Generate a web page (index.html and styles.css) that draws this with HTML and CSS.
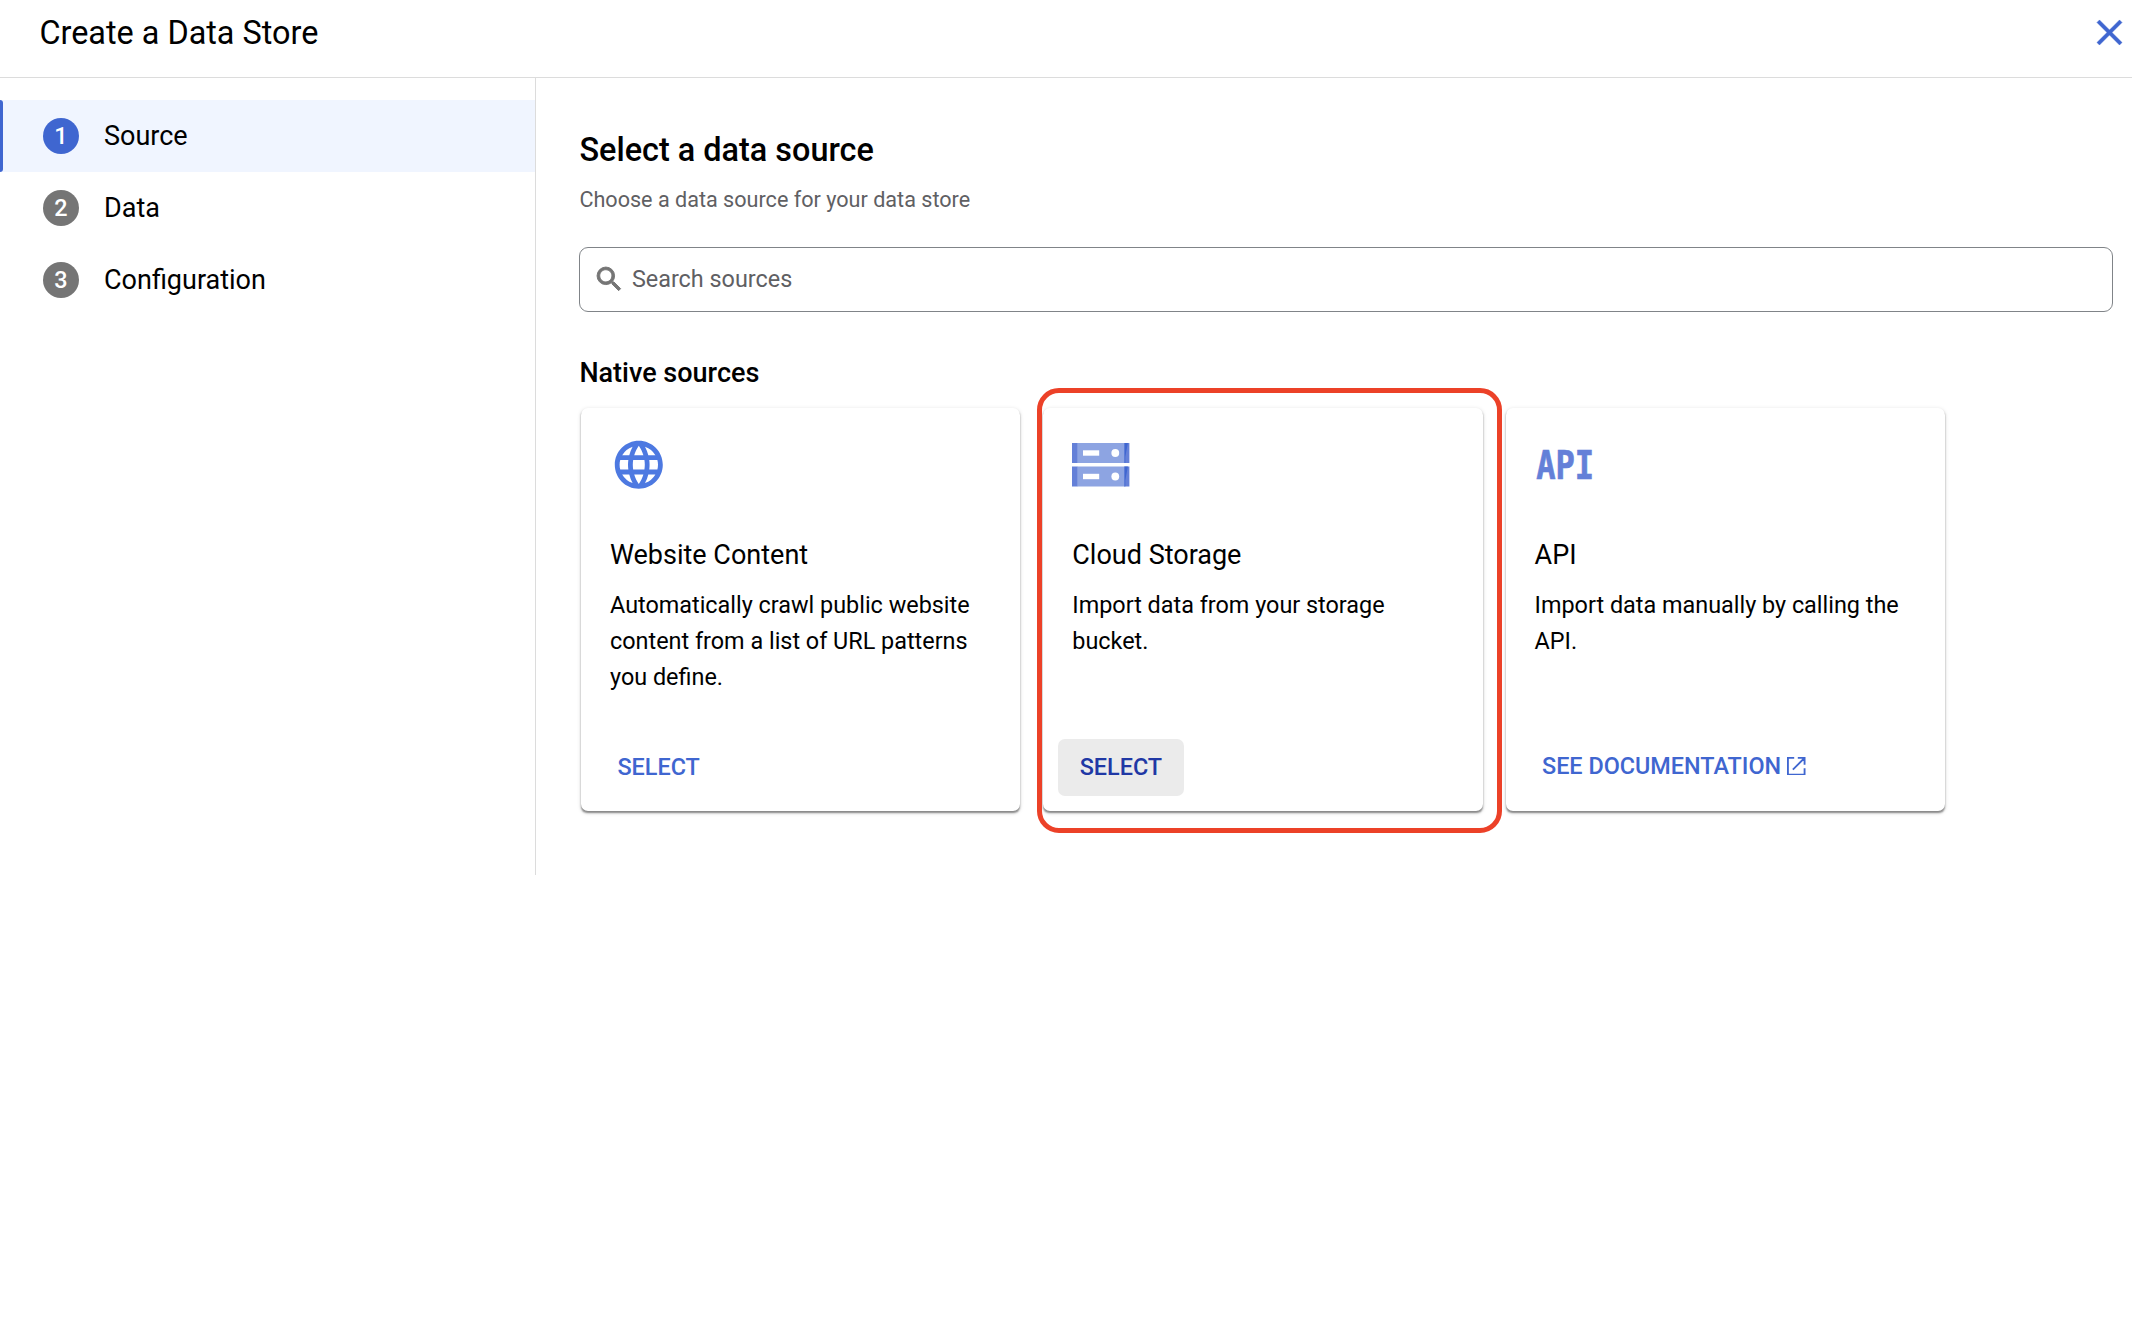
FILE: index.html
```html
<!DOCTYPE html>
<html lang="en">
<head>
<meta charset="utf-8">
<title>Create a Data Store</title>
<link rel="stylesheet" href="styles.css">
</head>
<body>
<header class="topbar">
  <h1 class="topbar-title">Create a Data Store</h1>
  <button class="close" aria-label="Close">
    <svg class="close-icon" viewBox="0 0 24 24"><path fill="currentColor" stroke="currentColor" stroke-width=".25" d="M19 6.41 17.59 5 12 10.59 6.41 5 5 6.41 10.59 12 5 17.59 6.41 19 12 13.41 17.59 19 19 17.59 13.41 12z"/></svg>
  </button>
</header>
<div class="layout">
  <nav class="steps">
    <a class="step step-active"><span class="step-number">1</span><span>Source</span></a>
    <a class="step"><span class="step-number">2</span><span>Data</span></a>
    <a class="step"><span class="step-number">3</span><span>Configuration</span></a>
  </nav>
  <main class="content">
    <h2 class="heading">Select a data source</h2>
    <p class="subheading">Choose a data source for your data store</p>
    <div class="search">
      <svg class="search-icon" viewBox="0 0 24 24"><path fill="currentColor" stroke="currentColor" stroke-width=".7" d="M15.5 14h-.79l-.28-.27A6.471 6.471 0 0 0 16 9.5 6.5 6.5 0 1 0 9.5 16c1.61 0 3.09-.59 4.23-1.57l.27.28v.79l5 4.99L20.49 19l-4.99-5zm-6 0C7.01 14 5 11.99 5 9.5S7.01 5 9.5 5 14 7.01 14 9.5 11.99 14 9.5 14z"/></svg>
      <span class="search-text">Search sources</span>
    </div>
    <h3 class="section-title">Native sources</h3>
    <div class="cards">
      <article class="card">
        <svg class="card-icon globe" viewBox="0 0 24 24"><path fill="currentColor" d="M11.99 2C6.47 2 2 6.48 2 12s4.47 10 9.99 10C17.52 22 22 17.52 22 12S17.52 2 11.99 2zm6.93 6h-2.95a15.65 15.65 0 0 0-1.38-3.56A8.03 8.03 0 0 1 18.92 8zM12 4.04c.83 1.2 1.48 2.53 1.91 3.96h-3.82c.43-1.43 1.08-2.76 1.91-3.96zM4.26 14C4.1 13.36 4 12.69 4 12s.1-1.36.26-2h3.38c-.08.66-.14 1.32-.14 2s.06 1.34.14 2H4.26zm.82 2h2.95c.32 1.25.78 2.45 1.38 3.56A7.987 7.987 0 0 1 5.08 16zm2.95-8H5.08a7.987 7.987 0 0 1 4.33-3.56A15.65 15.65 0 0 0 8.03 8zM12 19.96c-.83-1.2-1.48-2.53-1.91-3.96h3.82c-.43 1.43-1.08 2.76-1.91 3.96zM14.34 14H9.66c-.09-.66-.16-1.32-.16-2s.07-1.35.16-2h4.68c.09.65.16 1.32.16 2s-.07 1.34-.16 2zm.25 5.56c.6-1.11 1.06-2.31 1.38-3.56h2.95a8.03 8.03 0 0 1-4.33 3.56zM16.36 14c.08-.66.14-1.32.14-2s-.06-1.34-.14-2h3.38c.16.64.26 1.31.26 2s-.1 1.36-.26 2h-3.38z"/></svg>
        <h4 class="card-title">Website Content</h4>
        <p class="card-text">Automatically crawl public website content from a list of URL patterns you define.</p>
        <button class="select">SELECT</button>
      </article>
      <article class="card card-highlighted">
        <svg class="card-icon" viewBox="0 0 57.6 57.6">
          <g id="server">
            <path fill="#8da4e2" d="M5 7h48v20H5z"/>
            <path fill="#6480d8" d="M0 7h5.3v20H0zM52.5 7h4.9v20h-4.9z"/>
            <path fill="#3f66d0" d="M52.5 7h3.4l-2.6 14v6h-.8z"/>
            <path fill="#fff" d="M11 14.3h16.2v5.4H11z"/>
            <circle fill="#fff" cx="43.3" cy="17" r="3.9"/>
          </g>
          <use href="#server" y="23.5"/>
        </svg>
        <h4 class="card-title">Cloud Storage</h4>
        <p class="card-text">Import data from your storage bucket.</p>
        <button class="select select-hover">SELECT</button>
      </article>
      <article class="card">
        <svg class="card-icon" viewBox="0 0 57.6 57.6">
          <text class="api-mark" x="1.2" y="43" textLength="58" lengthAdjust="spacingAndGlyphs">API</text>
        </svg>
        <h4 class="card-title">API</h4>
        <p class="card-text">Import data manually by calling the API.</p>
        <a class="doc-link">SEE DOCUMENTATION<svg class="external-icon" viewBox="0 0 18 18"><path fill="none" stroke="currentColor" stroke-width="1.8" d="M7 .9H.9v16.2h16.2V11M10.5 .9h6.6v6.6M17 1 5.7 12.3"/></svg></a>
      </article>
    </div>
  </main>
</div>
</body>
</html>
```
FILE: styles.css
```css
* {
  box-sizing: border-box;
}

body {
  margin: 0;
  background: #fff;
  color: #000;
  font-family: Roboto, sans-serif;
  font-size: 23.4px;
  line-height: 36px;
}

h1, h2, h3, h4, p {
  margin: 0;
}

button {
  border: 0;
  background: none;
  font: inherit;
}

.topbar {
  display: flex;
  align-items: center;
  justify-content: space-between;
  height: 78px;
  padding: 0 1px 12px 39.4px;
  border-bottom: 1px solid #dcdcdc;
}

.topbar-title {
  font-size: 32.4px;
  font-weight: 400;
}

.close {
  display: flex;
  padding: 0;
  color: #3f66d0;
}

.close-icon {
  width: 43px;
  height: 43px;
}

.layout {
  display: flex;
  height: 797px;
}

.steps {
  width: 536px;
  flex: none;
  padding-top: 22px;
  border-right: 1px solid #dcdcdc;
}

.step {
  position: relative;
  display: flex;
  align-items: center;
  gap: 25px;
  height: 72px;
  padding-left: 43px;
  font-size: 27px;
}

.step-active {
  background: #f0f5ff;
}

.step-active::before {
  content: "";
  position: absolute;
  inset: 0 auto 0 0;
  width: 3px;
  border-radius: 0 3px 3px 0;
  background: #3f66d0;
}

.step-number {
  width: 36px;
  height: 36px;
  border-radius: 50%;
  background: #757575;
  color: #fff;
  font-size: 23.4px;
  font-weight: 500;
  text-align: center;
}

.step-active .step-number {
  background: #3f66d0;
}

.content {
  flex: 1;
  padding: 54px 19px 0 43px;
}

.heading {
  padding-left: .5px;
  font-size: 32.4px;
  font-weight: 500;
}

.subheading {
  margin-top: 13.6px;
  padding-left: .4px;
  color: #5f6063;
  font-size: 21.6px;
}

.search {
  display: flex;
  align-items: center;
  gap: 6.5px;
  height: 65px;
  margin-top: 29.4px;
  padding-left: 13px;
  border: 1px solid #808488;
  border-radius: 9px;
  color: #5f6063;
}

.search-icon {
  width: 32.4px;
  height: 32.4px;
  color: #757575;
}

.search-text {
  padding-bottom: 1px;
}

.section-title {
  margin-top: 43.5px;
  padding-left: .4px;
  font-size: 27px;
  font-weight: 500;
}

.cards {
  display: flex;
  gap: 23px;
  margin: 16.5px 0 0 2px;
}

.card {
  position: relative;
  display: flex;
  flex-direction: column;
  align-items: flex-start;
  width: 439.3px;
  height: 403px;
  padding: 28px 28.2px 14.5px 29px;
  border-radius: 7px;
  box-shadow: 0 2px 1.8px -0.8px rgba(0, 0, 0, .4), 0 1.8px 4px rgba(0, 0, 0, .15);
}

.card-highlighted::after {
  content: "";
  position: absolute;
  inset: -20px -19.3px -22px -6.4px;
  border: 5px solid #ec4128;
  border-radius: 22px;
}

.card-icon {
  width: 57.6px;
  height: 57.6px;
  overflow: visible;
}

.globe {
  color: #4d79e1;
}

.api-mark {
  fill: #6480d8;
  stroke: #6480d8;
  stroke-width: .7px;
  font: bold 39px "DejaVu Sans Mono", monospace;
}

.card-title {
  margin-top: 43px;
  font-size: 27px;
  font-weight: 400;
}

.card-text {
  margin-top: 14px;
}

.select {
  height: 57px;
  margin: auto 0 0 -14.4px;
  padding: 0 21.8px 2px;
  border-radius: 7px;
  color: #3f66d0;
  font-weight: 500;
}

.select-hover {
  background: #ebebeb;
  color: #2038a5;
}

.doc-link {
  display: flex;
  align-items: center;
  gap: 6px;
  margin: auto 0 12.5px 7.4px;
  color: #3f66d0;
  font-weight: 500;
}

.external-icon {
  width: 18.5px;
  height: 18.5px;
}
```
